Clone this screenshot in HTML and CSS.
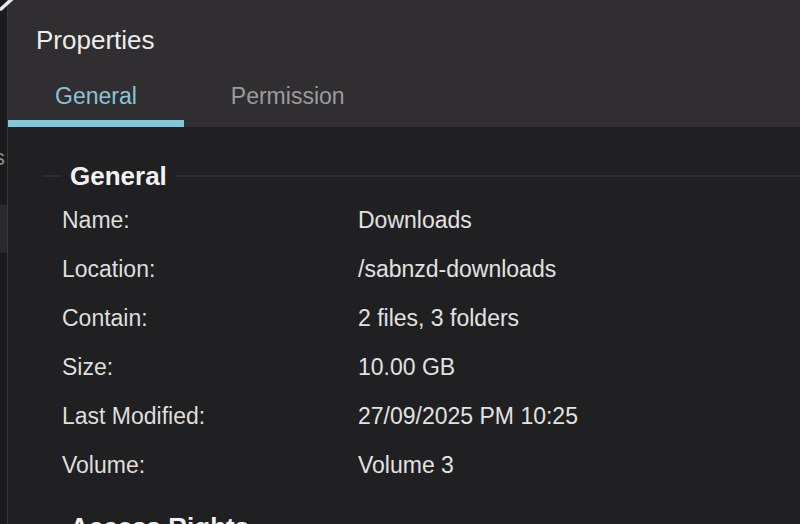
FILE: index.html
```html
<!DOCTYPE html>
<html lang="en">
<head>
<meta charset="utf-8">
<title>Properties</title>
<link rel="stylesheet" href="styles.css">
</head>
<body>
<div class="app">
  <div class="behind">
    <span class="behind-text">s</span>
    <div class="behind-box"></div>
  </div>
  <div class="dialog">
    <header class="head">
      <div class="title">Properties</div>
      <nav class="tabs">
        <div class="tab active">General</div>
        <div class="tab">Permission</div>
      </nav>
    </header>
    <main class="body">
      <div class="section-head"><span class="legend">General</span></div>
      <div class="rows">
        <div class="row"><span class="label">Name:</span><span class="value">Downloads</span></div>
        <div class="row"><span class="label">Location:</span><span class="value">/sabnzd-downloads</span></div>
        <div class="row"><span class="label">Contain:</span><span class="value">2 files, 3 folders</span></div>
        <div class="row"><span class="label">Size:</span><span class="value">10.00 GB</span></div>
        <div class="row"><span class="label">Last Modified:</span><span class="value">27/09/2025 PM 10:25</span></div>
        <div class="row"><span class="label">Volume:</span><span class="value">Volume 3</span></div>
      </div>
      <div class="section-head second"><span class="legend">Access Rights</span></div>
    </main>
  </div>
  <svg class="corner-glyph" width="16" height="12" viewBox="0 0 16 12"><path d="M1 9 L12 -1" stroke="#e6e6e6" stroke-width="3.5" fill="none" stroke-linecap="round"/></svg>
</div>
</body>
</html>
```

FILE: styles.css
```css
html, body {
  margin: 0;
  padding: 0;
  background: #1b1a1c;
  overflow: hidden;
}
body {
  font-family: "Liberation Sans", Arial, Helvetica, sans-serif;
  width: 800px;
  height: 524px;
}
.app {
  position: relative;
  display: flex;
  width: 800px;
  height: 524px;
  overflow: hidden;
}
.behind {
  width: 7px;
  flex: none;
  background: #1b1a1c;
  overflow: hidden;
  position: relative;
}
.behind-text {
  display: block;
  margin-top: 143px;
  margin-left: -6px;
  font-size: 22px;
  line-height: 30px;
  color: #8a898c;
}
.behind-box {
  margin-top: 32px;
  height: 48px;
  background: #29282b;
}
.corner-glyph {
  position: absolute;
  left: 0;
  top: 0;
}
.dialog {
  flex: 1;
  display: flex;
  flex-direction: column;
  border-left: 1px solid #39383b;
  background: #201f21;
}
.head {
  background: #302e31;
}
.title {
  padding: 24px 0 0 28px;
  font-size: 26px;
  line-height: 32px;
  color: #ececec;
}
.tabs {
  display: flex;
}
.tab {
  padding: 26px 47px 10px;
  line-height: 28px;
  font-size: 23px;
  color: #9c9b9e;
  border-bottom: 7px solid transparent;
}
.tab.active {
  color: #8fc1d3;
  border-bottom-color: #86c5d8;
}
.body {
  flex: 1;
  padding: 34px 0 0 34px;
  background: #201f21;
}
.section-head {
  display: flex;
  align-items: center;
  height: 30px;
}
.section-head::before {
  content: "";
  width: 20px;
  height: 2px;
  background: #2c2b2e;
  margin-right: 8px;
}
.section-head::after {
  content: "";
  flex: 1;
  height: 2px;
  background: #2c2b2e;
  margin-left: 8px;
}
.legend {
  font-size: 26px;
  font-weight: bold;
  color: #f2f2f2;
  line-height: 30px;
}
.section-head.second {
  margin-top: 22px;
}
.rows {
  margin-top: 5px;
  padding-left: 20px;
}
.row {
  display: flex;
  height: 49px;
  line-height: 49px;
  font-size: 23px;
  color: #dedede;
}
.label {
  width: 296px;
  flex: none;
}
.value {
  color: #e2e2e2;
}
```
